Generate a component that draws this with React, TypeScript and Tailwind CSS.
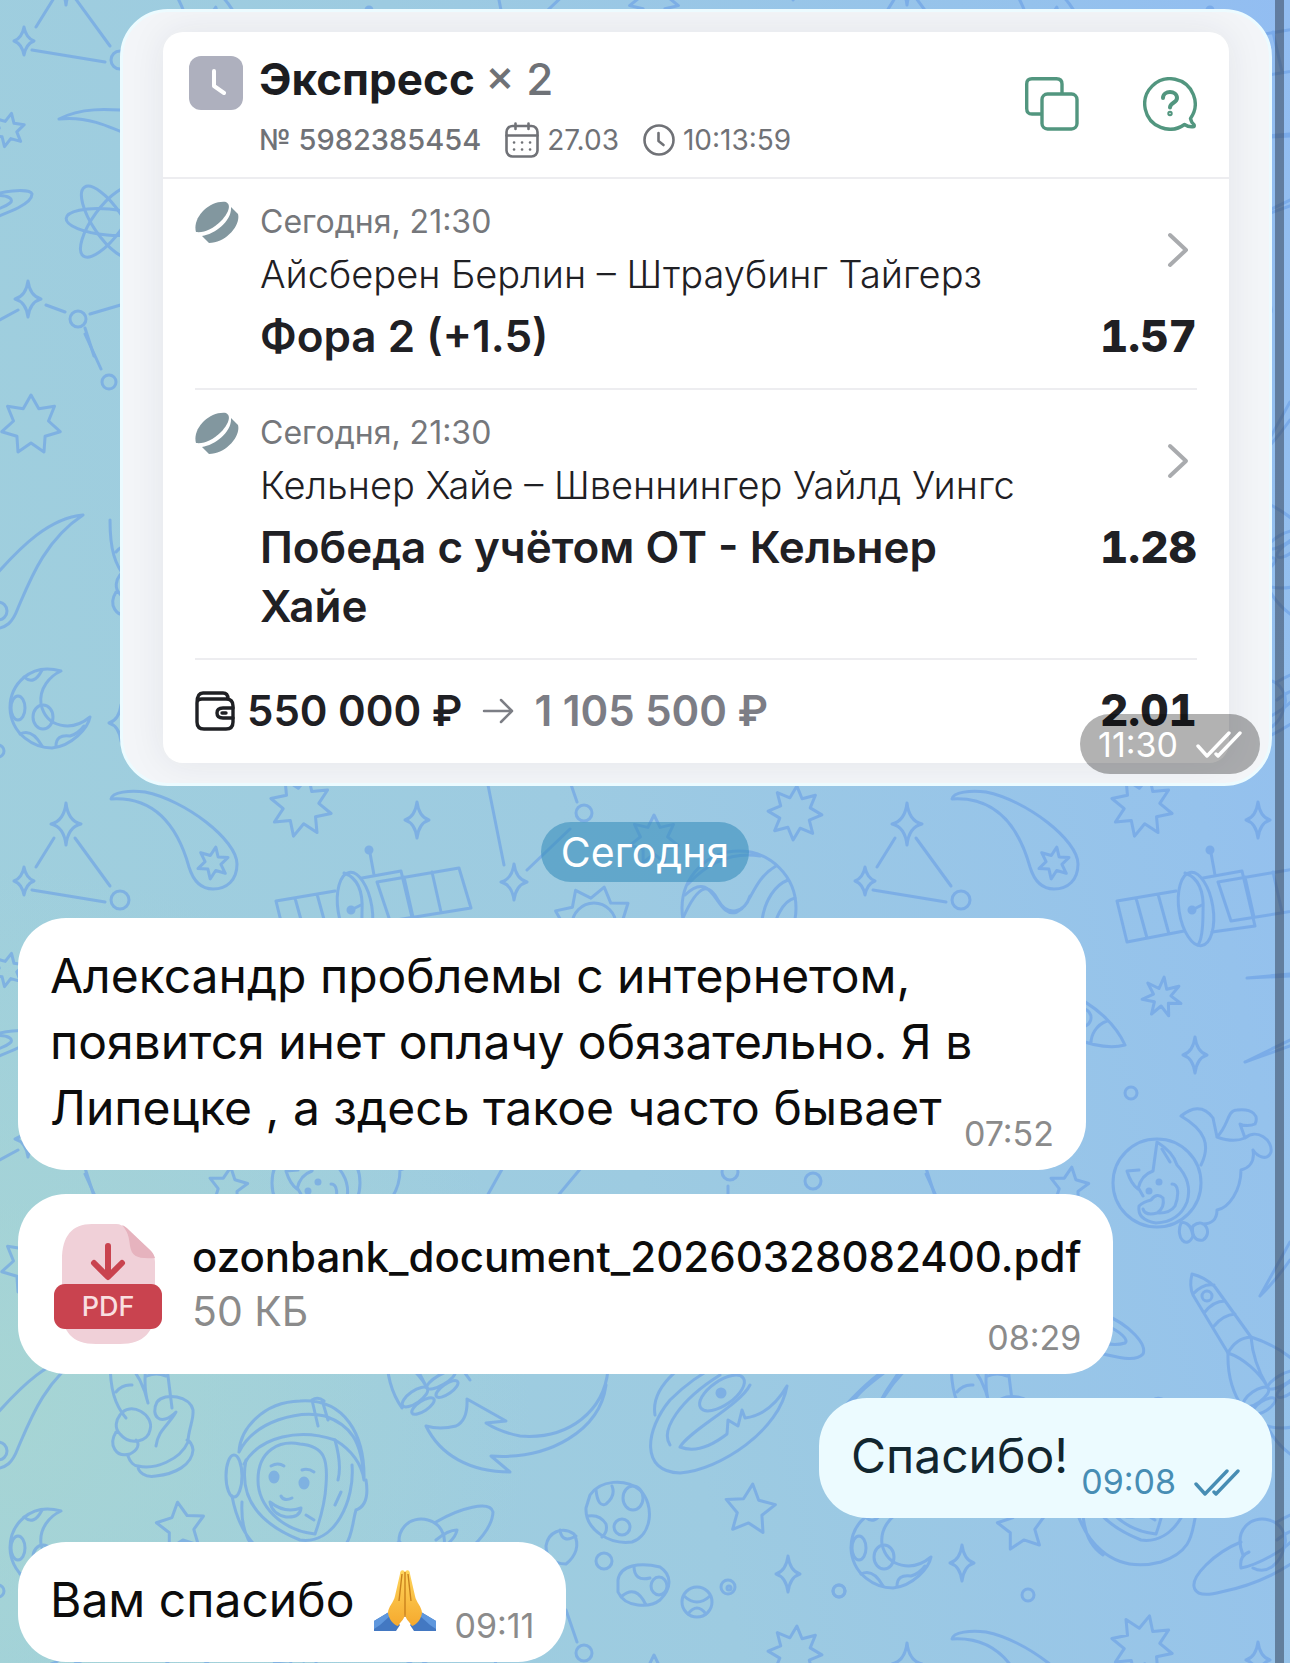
import { ReactNode } from "react";

interface BetEvent {
  date: string;
  teams: string;
  outcome: string;
  odds: string;
}

const events: BetEvent[] = [
  {
    date: "Сегодня, 21:30",
    teams: "Айсберен Берлин – Штраубинг Тайгерз",
    outcome: "Фора 2 (+1.5)",
    odds: "1.57",
  },
  {
    date: "Сегодня, 21:30",
    teams: "Кельнер Хайе – Швеннингер Уайлд Уингс",
    outcome: "Победа с учётом ОТ - Кельнер Хайе",
    odds: "1.28",
  },
];

// points of a star polygon
const star = (cx: number, cy: number, outer: number, inner: number, n: number, turn = 0) => {
  const pts: string[] = [];
  for (let i = 0; i < n * 2; i++) {
    const r = i % 2 ? inner : outer;
    const a = (Math.PI * i) / n - Math.PI / 2 + (turn * Math.PI) / 180;
    pts.push(`${(cx + r * Math.cos(a)).toFixed(1)},${(cy + r * Math.sin(a)).toFixed(1)}`);
  }
  return pts.join(" ");
};

const Sparkle = ({ x, y, w = 12, h = 18 }: { x: number; y: number; w?: number; h?: number }) => (
  <path
    d={`M${x} ${y - h}Q${x + 2} ${y - 3} ${x + w} ${y}Q${x + 2} ${y + 3} ${x} ${y + h}Q${x - 2} ${y + 3} ${x - w} ${y}Q${x - 2} ${y - 3} ${x} ${y - h}Z`}
  />
);

// one 841x840 tile of the space wallpaper
const Doodles = () => (
  <>
    {/* triangle */}
    <Sparkle x={66} y={824} w={15} h={21} />
    <Sparkle x={24} y={881} w={10} h={14} />
    <circle cx="120" cy="900" r="9" />
    <path d="M54 838L36 867M75 838L110 886M32 890L105 902" />

    {/* comet */}
    <path d="M111 799C112 792 130 790 145 792C185 800 237 840 237 864C237 880 227 889 213 889C200 889 193 880 189 867C180 835 160 796 111 799Z" />
    <polygon points={star(213, 863, 16, 8, 6, 10)} />
    <polygon points={star(301, 806, 31, 18, 8, 14)} />
    <Sparkle x={417} y={820} />

    {/* satellite */}
    <path d="M276 901L335 891M286 942L343 931M276 901L286 942M295 898L306 938M317 894L328 934" />
    <path d="M377 882L459 868L471 908L390 921ZM404 877L413 917M432 872L441 912" />
    <path d="M362 878L401 871L414 926L371 932M374 875L370 853" />
    <ellipse cx="355" cy="909" rx="17" ry="37" transform="rotate(-9 355 909)" />
    <path d="M344 873Q364 880 362 912Q362 938 357 945" />
    <circle cx="369" cy="850" r="3" fill="currentColor" />
    <circle cx="351" cy="910" r="3" fill="currentColor" />
    <path d="M351 910L361 905" />

    {/* constellation */}
    <path d="M486 775L504 865M566 770L577 802M570 829L527 870" />
    <circle cx="584" cy="813" r="8" />
    <Sparkle x={514} y={882} w={13} h={18} />
    <polygon points={star(654, 840, 25, 14, 7)} />
    <polygon points={star(795, 813, 27, 16, 8, 4)} />

    {/* sun and striped planet */}
    <polygon points={star(594, 928, 42, 30, 9, 14)} />
    <circle cx="594" cy="925" r="22" />
    <circle cx="739" cy="908" r="57" />
    <path d="M688 884Q720 850 760 856M685 895C715 866 715 920 737 912C752 905 752 880 776 866M762 920C765 900 775 885 788 880M776 940C770 920 785 900 795 898M683 918C700 880 710 885 718 900C728 918 745 912 750 896" />

    {/* top left strip */}
    <polygon points={star(8, 130, 17, 9, 6, 12)} />
    <path d="M59 119C80 108 105 108 140 112M59 119C85 116 105 124 140 140" />
    <path d="M-20 200C0 190 30 188 32 194C32 204 10 212 -12 220M-8 196C10 194 14 200 10 203C4 208 -5 210 -12 211" />
    <g transform="translate(108 222)">
      <ellipse rx="42" ry="13" transform="rotate(5)" />
      <ellipse rx="42" ry="15" transform="rotate(56)" />
      <ellipse rx="42" ry="15" transform="rotate(126)" />
    </g>
    <Sparkle x={28} y={299} w={13} h={18} />
    <path d="M-4 322L18 310M46 305L65 312M90 314L124 304M85 334L101 369" />
    <circle cx="78" cy="319" r="8" />
    <circle cx="109" cy="382" r="7" />
    <polygon points={star(31, 425, 30, 18, 7)} />
    <path d="M83 515C50 518 22 545 -6 577M83 515C45 540 30 580 18 608C12 624 6 627 -4 629" />
    <circle cx="-2" cy="611" r="9" />

    {/* rocket nose, star, sparkle */}
    <path d="M225 152C255 165 275 185 284 205C270 209 250 205 232 198M266 181C255 185 250 195 250 203M232 178a9 9 0 1 0 2 -6" />
    <polygon points={star(321, 157, 20, 9, 7, 6)} />
    <Sparkle x={354} y={215} w={12} h={18} />
    <circle cx="290" cy="253" r="6" />
    <path d="M406 138L449 136M406 138L449 134M404 222L449 200M404 222Q430 213 449 206" />

    {/* small bits of the middle row */}
    <polygon points={star(228, 347, 20, 10, 5, 8)} />
    <path d="M85 328L94 356M506 322L486 358M586 322L556 358M728 346L728 362" />
    <circle cx="730" cy="332" r="8" />
    <circle cx="813" cy="341" r="8" />

    {/* dog in a helmet */}
    <circle cx="316" cy="343" r="44" />
    <path d="M298 330L286 331Q290 344 297 349Q300 335 312 331L316 302Q332 312 336 325Q352 342 346 362Q338 382 315 383Q296 380 298 366Q302 362 310 360Q316 352 322 358Q324 368 316 373Q304 376 302 369" />
    <path d="M321 309L329 322M331 344C338 344 338 356 334 366C330 372 322 373 318 373M298 349L302 356M360 325C370 305 364 290 340 276C350 268 362 264 372 278L376 297C388 285 386 270 396 270C412 268 418 276 414 284C410 286 402 286 399 284L404 298C395 302 384 300 376 297M404 298C416 288 432 300 430 312C426 322 416 316 412 310M412 310C414 322 408 328 400 330C400 350 388 368 376 370C376 380 370 384 362 384M340 383C334 398 346 410 352 396C350 382 342 382 340 383M352 386C364 376 372 394 362 400C354 402 350 394 352 386" />
    <circle cx="318" cy="342" r="2" fill="currentColor" />
    <circle cx="308" cy="351" r="2" fill="currentColor" />

    {/* rocket */}
    <path d="M351 434Q348 446 352 455L387 513M351 434Q364 437 374 447L410 497M352 454Q362 443 373 445M363 473Q372 461 384 461M373 486Q382 475 394 474M387 513Q395 498 410 497" />
    <path d="M387 513Q386 545 402 568M387 513C402 518 418 532 426 546M410 497Q412 522 426 546M410 497Q450 510 470 540" />
    <circle cx="366" cy="456" r="5" />
    <ellipse cx="415" cy="557" rx="15" ry="6" transform="rotate(-35 415 557)" />
    <ellipse cx="423" cy="566" rx="13" ry="5" transform="rotate(-33 423 566)" />
    <ellipse cx="441" cy="540" rx="16" ry="5" transform="rotate(-30 441 540)" />
    <ellipse cx="447" cy="549" rx="13" ry="5" transform="rotate(-35 447 549)" />
    <path d="M419 456L449 402M419 456Q435 440 449 420" />
    <path d="M262 474C290 485 306 505 302 514C295 522 280 518 262 514M265 485C280 492 288 500 284 503Q275 506 262 503" />

    {/* peace sign */}
    <path d="M110 520C110 550 115 565 126 578M148 563C144 545 135 530 126 520M148 563C144 550 144 530 148 520M166 520L172 568M116 552Q122 544 132 545M147 536Q156 532 166 536" />
    <path d="M120 575C130 560 155 575 150 590C148 602 130 606 120 594C114 588 116 580 120 575ZM116 592C108 605 116 618 130 614C138 610 140 604 136 600M128 616C130 622 134 626 138 626C155 630 180 620 188 602C188 590 194 580 193 570C190 556 165 552 157 562C150 575 160 588 176 572C168 586 158 590 156 606M138 626C138 632 145 638 156 636C175 634 192 625 193 610Q192 602 187 600" />

    {/* astronaut */}
    <path d="M239 612C240 590 262 562 300 561C345 558 365 595 364 640M239 612C255 580 300 570 325 576C350 585 362 600 364 640M244 624C260 596 300 588 335 600C352 610 362 625 364 640M312 560L318 586M322 560L328 580M312 560Q318 556 324 561" />
    <ellipse cx="234" cy="636" rx="8" ry="21" />
    <path d="M246 620C240 650 250 680 300 700C335 705 355 660 352 625M258 640C258 610 280 600 300 604C325 606 328 620 326 645C325 665 320 680 315 694M258 640C258 665 280 690 315 694M335 600Q342 625 338 640M335 665L341 652M232 656C240 700 270 735 320 722C355 710 350 690 356 670Q370 665 366 640M242 662Q240 700 262 715" />
    <path d="M271 626Q278 622 284 626M302 630Q308 628 314 632M281 656Q284 662 292 658M270 662Q285 674 301 668Q300 678 286 677Q272 674 270 662ZM306 675L314 680" />
    <ellipse cx="274" cy="637" rx="4" ry="5" fill="currentColor" />
    <ellipse cx="304" cy="643" rx="4" ry="5" fill="currentColor" />

    {/* flame tail */}
    <path d="M608 530C604 570 570 600 520 596Q500 592 486 583L506 581L467 559Q468 580 456 586Q440 590 426 586C440 615 470 632 510 632L491 616C550 620 600 590 606 545" />

    {/* galaxy */}
    <path d="M655 575C650 545 690 515 715 512M787 546C780 590 720 630 680 633C640 632 645 590 670 560C700 530 740 510 780 508M787 546Q770 575 745 578L742 570L738 586L728 580L727 594Q700 615 680 607C690 590 740 565 750 545M670 605C660 590 680 560 720 535" />
    <ellipse cx="722" cy="553" rx="26" ry="12" transform="rotate(-35 722 553)" />
    <circle cx="721" cy="553" r="4" fill="currentColor" />
    <path d="M852 563C860 550 875 540 890 528M880 563C885 550 895 540 900 530" />

    {/* moon */}
    <path d="M61 671C30 662 10 685 10 708C11 735 35 748 52 748C72 746 88 728 90 717C72 732 46 728 41 704C39 688 50 676 61 671Z" />
    <ellipse cx="18" cy="708" rx="7" ry="12" />
    <ellipse cx="43" cy="717" rx="10" ry="12" />
    <path d="M24 677Q34 686 42 670M20 734Q32 728 42 746M56 746Q56 734 70 736Q78 734 84 726" />
    <Sparkle x={121} y={723} />
    <circle cx="187" cy="755" r="6" />
    <circle cx="839" cy="751" r="6" />
    <circle cx="-2" cy="751" r="6" />
    <polygon points={star(181, 687, 25, 13, 5, -8)} />

    {/* saturn */}
    <path d="M402 715C392 690 410 675 428 680C440 683 446 695 444 704M444 704C440 725 425 735 412 728" />
    <path d="M436 682C460 668 490 660 493 672C492 700 440 740 380 752C350 760 345 745 365 725Q380 710 400 702M436 700Q448 690 457 690Q455 702 430 716Q412 726 400 728Q398 716 408 712" />

    {/* asteroids */}
    <path d="M590 655C600 640 625 638 640 650C655 665 652 695 632 702C610 705 585 690 586 668Z" />
    <circle cx="622" cy="687" r="8" />
    <ellipse cx="633" cy="658" rx="10" ry="12" />
    <path d="M596 650Q598 668 606 664Q616 656 612 646M588 676Q600 674 606 684Q608 692 602 697" />
    <path d="M546 706C548 692 562 686 574 694C580 705 576 716 566 724C552 724 546 716 546 706ZM560 690Q562 704 576 696" />
    <circle cx="604" cy="721" r="8" />
    <path d="M618 740C620 725 640 722 660 727C672 735 672 748 660 760C650 768 625 768 618 752ZM634 726Q634 742 650 738M622 756Q636 744 646 765" />
    <ellipse cx="659" cy="746" rx="8" ry="9" />
    <circle cx="697" cy="762" r="15" />
    <path d="M684 756Q697 768 710 756M688 774Q697 762 706 774" />
    <circle cx="728" cy="747" r="7" />
    <circle cx="729" cy="748" r="2" />
    <polygon points={star(750, 670, 26, 13, 5, 6)} />
    <Sparkle x={788} y={734} />
  </>
);

const tiles = [
  [0, -840], [0, 0], [0, 840],
  [841, -840], [841, 0], [841, 840],
];

const Wallpaper = () => (
  <svg
    className="absolute inset-0 h-full w-full text-[#6ba0e6]"
    fill="none"
    stroke="currentColor"
    strokeWidth="3"
    strokeLinecap="round"
    strokeLinejoin="round"
    opacity="0.62"
    aria-hidden="true"
  >
    {tiles.map(([x, y]) => (
      <g key={`${x}:${y}`} transform={`translate(${x} ${y})`}>
        <Doodles />
      </g>
    ))}
  </svg>
);

const Checks = () => (
  <svg className="h-[27px] w-[46px]" viewBox="0 0 46 27" fill="none" stroke="currentColor" strokeWidth="3.4" strokeLinecap="round" strokeLinejoin="round">
    <path d="M2 15L11 25L33 2M20 23L22 25L44 2" />
  </svg>
);

const Puck = () => (
  <svg className="h-[42px] w-[44px]" viewBox="0 0 44 42" fill="#82979f">
    <path d="M1 31C-3 17 14 -1 31 1C37 4 33 13 26 20C18 28 9 32 1 31Z" />
    <path d="M36 6L43 13C46 24 31 42 14 42L7 35C20 33 37 20 36 6Z" />
  </svg>
);

const CalendarIcon = () => (
  <svg className="h-9 w-[34px]" viewBox="0 0 34 36" fill="none" stroke="currentColor" strokeWidth="2.6" strokeLinecap="round">
    <rect x="1.5" y="4" width="31" height="30.5" rx="6" />
    <path d="M1.5 13.5H32.5M10.5 1.500V7M23.5 1.500V7" />
    <path d="M9 20.5H9.1M17 20.5H17.1M25 20.5H25.1M9 27.5H9.1M17 27.5H17.1M25 27.5H25.1" />
  </svg>
);

const ClockIcon = () => (
  <svg className="h-8 w-8" viewBox="0 0 32 32" fill="none" stroke="currentColor" strokeWidth="2.6" strokeLinecap="round" strokeLinejoin="round">
    <circle cx="16" cy="16" r="14.5" />
    <path d="M15.5 9V17L20.5 21" />
  </svg>
);

const PdfIcon = () => (
  <svg className="h-[120px] w-[108px] shrink-0" viewBox="0 0 108 120">
    <path d="M38 0H62C66 0 70 2 73 5L96 26C99 29 101 33 101 38V84C101 108 90 120 66 120H42C18 120 8 108 8 84V36C8 12 18 0 38 0Z" fill="#f0d0d8" />
    <path d="M68 1C71 2 73 4 75 6L96 26C99 29 100 31 101 34C84 35 78 33 76 22C75 13 74 8 68 1Z" fill="#e6b3be" />
    <path d="M54 22V52M40 39L54 53L68 39" fill="none" stroke="#c9434f" strokeWidth="6" strokeLinecap="round" strokeLinejoin="round" />
    <rect y="60" width="108" height="45" rx="11" fill="#c9434f" />
    <text x="54" y="92" textAnchor="middle" fontSize="27" fontWeight="500" fill="#f9dfe0">PDF</text>
  </svg>
);

const Pray = () => (
  <svg className="h-[62px] w-[62px]" viewBox="0 0 62 62" role="img" aria-label="🙏">
    <defs>
      <linearGradient id="skin" x1="0" y1="0" x2="0" y2="1">
        <stop offset="0" stopColor="#ffd65c" />
        <stop offset="1" stopColor="#f5a92e" />
      </linearGradient>
    </defs>
    <path d="M0 52L15 43L26 56L22 62H0Z" fill="#4378c2" />
    <path d="M62 52L47 43L36 56L40 62H62Z" fill="#4378c2" />
    <path d="M0 52L15 43L17 46L6 56L0 60Z" fill="#5f97dd" />
    <path d="M62 52L47 43L45 46L56 56L62 60Z" fill="#5f97dd" />
    <path d="M31 3C29 0 26 1 26 5L21 27C20 33 14 38 14 44C15 51 20 56 24 57C27 52 31 50 31 44Z" fill="url(#skin)" />
    <path d="M31 3C33 0 36 1 36 5L41 27C42 33 48 38 48 44C47 51 42 56 38 57C35 52 31 50 31 44Z" fill="url(#skin)" />
    <path d="M31 3V48M28 5L25 32M34 5L37 32" stroke="#c9821d" strokeWidth="1.4" fill="none" />
  </svg>
);

const Stamp = ({ children }: { children: ReactNode }) => (
  <span className="absolute right-8 bottom-[18px] flex items-center gap-[18px] text-[34px] leading-9 text-[#8b8b8b]">
    {children}
  </span>
);

const BetCard = () => (
  <div className="rounded-[20px] bg-white text-[#1f2024] shadow-[0_0_36px_rgba(40,40,60,0.08)]">
    <div className="flex h-[147px] items-start border-b-2 border-[#ededf0] pt-6 pr-8 pl-[26px]">
      <div className="flex h-[54px] w-[54px] shrink-0 items-center justify-center rounded-xl bg-[#aeb0be]">
        <svg className="h-7 w-5" viewBox="0 0 20 28" fill="none" stroke="white" strokeWidth="4" strokeLinecap="round" strokeLinejoin="round">
          <path d="M8 2V17L18 24" />
        </svg>
      </div>
      <div className="flex-1 pl-4">
        <h2 className="text-[44px] leading-[46px] font-bold text-[#1c1d21]">
          Экспресс <span className="font-medium text-[#6f7277]">× 2</span>
        </h2>
        <div className="mt-5 flex items-center text-[28px] leading-9 text-[#707277]">
          <span className="text-[29px] font-medium">№ 5982385454</span>
          <span className="ml-6 flex items-center gap-2"><CalendarIcon />27.03</span>
          <span className="ml-6 flex items-center gap-2"><ClockIcon />10:13:59</span>
        </div>
      </div>
      <div className="flex gap-16 pt-[21px] text-[#52967f]">
        <button aria-label="Копировать">
          <svg className="h-[54px] w-[54px]" viewBox="0 0 54 54" fill="none" stroke="currentColor" strokeWidth="3.4" strokeLinejoin="round">
            <rect x="17" y="17" width="35" height="35" rx="5.5" />
            <path d="M17 37H7Q1.700 37 1.700 31.500V7Q1.700 1.700 7 1.700H31.500Q37 1.700 37 7V17" />
          </svg>
        </button>
        <button aria-label="Помощь">
          <svg className="h-[54px] w-[54px]" viewBox="0 0 54 54" fill="none" stroke="currentColor" strokeWidth="3.4" strokeLinecap="round" strokeLinejoin="round">
            <path d="M47.500 41.500A25.200 25.200 0 1 0 41.500 47.500Q46 50.500 51 49.500Q52 48 49 45.500Q48 43.500 47.500 41.500Z" />
            <path d="M20 21C20 13 34 13 34 21C34 26 27 25.500 27 30.500" strokeWidth="4" />
            <circle cx="27" cy="36.500" r="1" />
          </svg>
        </button>
      </div>
    </div>

    {events.map((event) => (
      <div
        key={event.teams}
        className="mx-8 grid grid-cols-[65px_1fr_auto] border-b-2 border-[#ededf0] pt-[19px] pb-[22px]"
      >
        <div className="row-span-2 pt-[3px]"><Puck /></div>
        <div>
          <p className="text-[32px] leading-[48px] text-[#75777b]">{event.date}</p>
          <p className="text-[38px] leading-[56px] font-light">{event.teams}</p>
        </div>
        <button aria-label="Подробнее" className="flex items-center justify-end pr-2">
          <svg className="h-9 w-[22px]" viewBox="0 0 22 36" fill="none" stroke="#a9abae" strokeWidth="4" strokeLinecap="round" strokeLinejoin="round">
            <path d="M3 3L19 18L3 33" />
          </svg>
        </button>
        <p className="mt-[5px] max-w-[740px] text-[44px] leading-[59px] font-semibold">{event.outcome}</p>
        <p className="mt-[5px] text-right text-[44px] leading-[59px] font-extrabold tabular-nums">{event.odds}</p>
      </div>
    ))}

    <div className="mx-8 flex items-center pt-[21px] pb-[23px] text-[42px] leading-[59px] font-semibold">
      <svg className="h-10 w-10 shrink-0" viewBox="0 0 40 40" fill="none" stroke="currentColor" strokeWidth="3.4" strokeLinejoin="round">
        <path d="M2 12V31Q2 38 9 38H31Q38 38 38 31V15Q38 8 31 8H7Q2 8 2 12Q2 2 8 2H28Q33 2 33 8" />
        <path d="M38 17H28Q22 17 22 22Q22 27 28 27H38M27 22H31" strokeLinecap="round" />
      </svg>
      <span className="ml-3">550 000 ₽</span>
      <svg className="mx-5 h-7 w-8" viewBox="0 0 32 28" fill="none" stroke="#7c7e85" strokeWidth="2.500" strokeLinecap="round" strokeLinejoin="round">
        <path d="M2 14H30M19 3L30 14L19 25" />
      </svg>
      <span className="text-[#7c7d85]">1 105 500 ₽</span>
      <span className="ml-auto text-[44px] font-extrabold tabular-nums">2.01</span>
    </div>
  </div>
);

const App = () => {
  return (
    <main className="relative flex min-h-screen flex-col overflow-hidden bg-[radial-gradient(circle_at_0%_84%,rgba(168,214,210,0.8),rgba(168,214,210,0)_28%),linear-gradient(78deg,#a0d0dc_0%,#9dcbe1_45%,#95c2ec_84%,#92bdf2_100%)] font-['Inter',sans-serif]">
      <Wallpaper />
      <div className="absolute top-0 right-[6px] bottom-0 w-[9px] bg-[#38475d]/55" />

      <div className="relative flex flex-col items-start pt-[9px] pr-[18px] pb-px pl-[18px]">
        <div className="relative w-full pl-[102px]">
          <div className="overflow-hidden rounded-[48px] border-3 border-[#ecfbff] bg-[#f3f5f8] px-10 py-5">
            <BetCard />
          </div>
          <span className="absolute right-3 bottom-3 flex h-[60px] items-center gap-[18px] rounded-full bg-black/30 px-[18px] text-[34px] text-white">
            11:30 <Checks />
          </span>
        </div>

        <div className="my-9 self-center rounded-full bg-[#3b8fbd]/60 px-5 text-[41px] leading-[60px] text-white">
          Сегодня
        </div>

        <div className="relative w-full max-w-[1068px] rounded-[48px] bg-white px-8 pt-[25px] pb-[29px]">
          <p className="max-w-[960px] text-[48px] leading-[66px] text-[#0c0c0c]">
            Александр проблемы с интернетом, появится инет оплачу обязательно. Я в Липецке , а здесь такое часто бывает
          </p>
          <Stamp>07:52</Stamp>
        </div>

        <div className="relative mt-6 flex gap-[30px] rounded-[48px] bg-white py-[30px] pr-8 pl-9">
          <PdfIcon />
          <div className="pt-[6px]">
            <a href="#" className="block text-[42px] leading-[54px] font-medium text-[#0c0c0c]">
              ozonbank_document_20260328082400.pdf
            </a>
            <p className="text-[41px] leading-[54px] text-[#8b8b8b]">50 КБ</p>
          </div>
          <Stamp>08:29</Stamp>
        </div>

        <div className="relative mt-6 self-end rounded-[48px] bg-[#ecfbff] pt-[25px] pr-[204px] pb-[29px] pl-8">
          <p className="text-[48px] leading-[66px] text-[#12262f]">Спасибо!</p>
          <Stamp>
            <span className="text-[#478db4]">09:08</span>
            <span className="text-[#478db4]"><Checks /></span>
          </Stamp>
        </div>

        <div className="relative mt-6 flex items-center gap-5 rounded-[48px] bg-white pt-[25px] pr-[130px] pb-[29px] pl-8">
          <p className="text-[48px] leading-[66px] text-[#0c0c0c]">Вам спасибо</p>
          <Pray />
          <Stamp>09:11</Stamp>
        </div>
      </div>
    </main>
  );
};

export default App;
